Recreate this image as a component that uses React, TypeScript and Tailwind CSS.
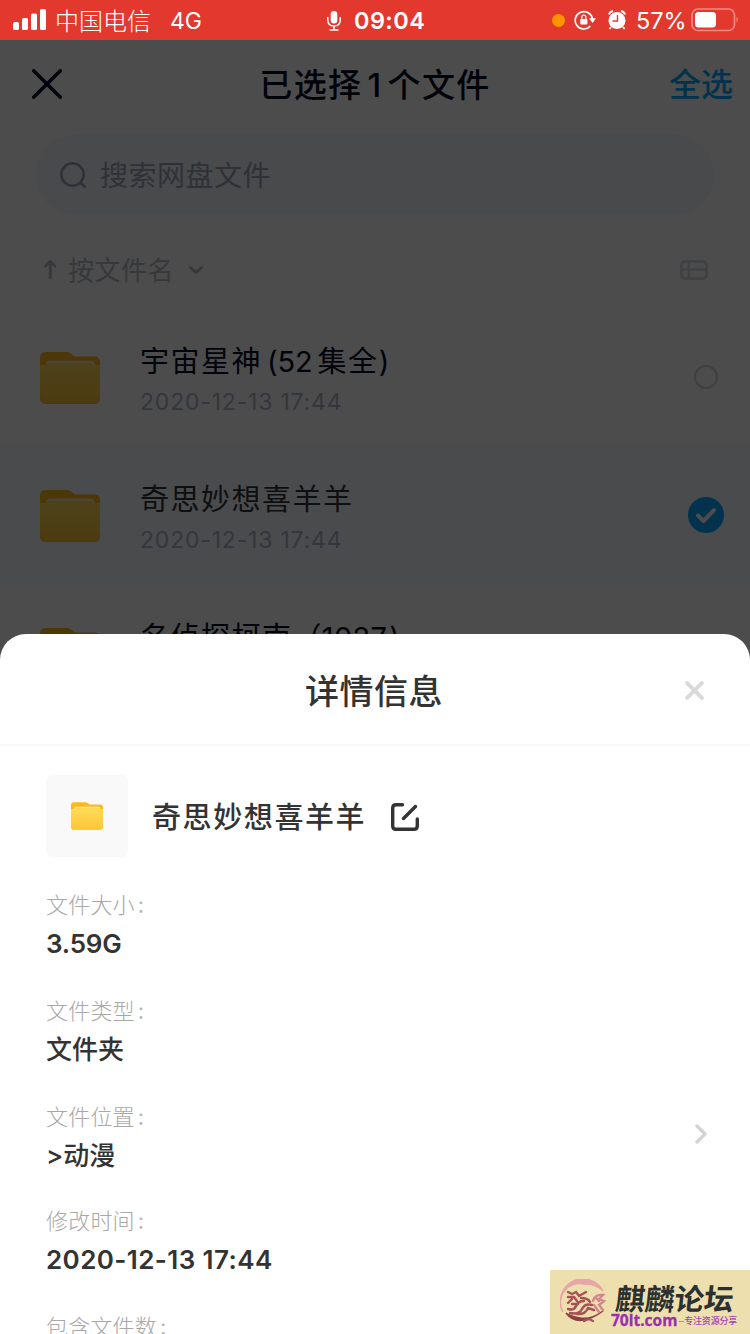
import React from 'react';

const font = "font-['Inter','Noto_Sans_CJK_SC',sans-serif]";

function Folder({ className, dim }: { className: string; dim?: boolean }) {
  const id = dim ? 'fd' : 'fl';
  const back = dim ? '#4c3708' : '#ffb81c';
  const top = dim ? '#4c421a' : '#ffdb58';
  const bottom = dim ? '#4c3b10' : '#ffc636';
  const edge = dim ? '#4c4534' : '#ffe6ae';
  return (
    <svg viewBox="0 0 60 52" className={className}>
      <defs>
        <linearGradient id={id} x1="0" y1="0" x2="0" y2="1">
          <stop offset="0" stopColor={top} />
          <stop offset="1" stopColor={bottom} />
        </linearGradient>
      </defs>
      <path d="M0 6Q0 0 6 0H27Q29 0 31 1.5L34 4Q35 4.600 37 4.600H54Q60 4.600 60 10.500V20H0Z" fill={back} />
      <path d="M5.500 14Q5.500 8.500 10 8.500H51Q55 8.500 55 14Z" fill={edge} />
      <path d="M0 13H6Q6 11 9 11H51Q54 11 54.500 13H60V46Q60 52 54 52H6Q0 52 0 46Z" fill={`url(#${id})`} />
      <path d="M.6 44Q.6 51.400 7 51.400H53Q59.400 51.400 59.400 44" fill="none" stroke={back} strokeWidth="1" opacity=".7" />
    </svg>
  );
}

function StatusBar() {
  return (
    <div className="flex h-10 shrink-0 items-center bg-[#e3382e] text-white">
      <svg viewBox="0 0 34 22" className="ml-[13px] h-[22px] w-[34px] shrink-0" fill="white">
        <rect y="13" width="6" height="8" rx="1.600" />
        <rect x="9" y="9" width="6" height="12" rx="1.600" />
        <rect x="18" y="4.500" width="6" height="16.500" rx="1.600" />
        <rect x="27" y="0" width="6" height="21" rx="1.600" />
      </svg>
      <div className="ml-2 w-[115px] pt-[3px] text-[24px] leading-[37px] font-light whitespace-nowrap">中国电信</div>
      <div className="w-[157px] pt-[2px] text-[23px] leading-[38px]">4G</div>
      <svg viewBox="0 0 14 20" className="mt-[1px] h-5 w-[14px] shrink-0" fill="none" stroke="white" strokeWidth="1.500">
        <rect x="3.700" y="0" width="6.600" height="12.500" rx="3.300" fill="white" stroke="none" />
        <path d="M.8 6V9Q.8 15 7 15T13.200 9V6M7 15V19M2.500 19H11.500" />
      </svg>
      <div className="ml-[13px] w-[198px] pt-[2px] text-[23.500px] leading-[38px] font-semibold tracking-[0.4px]">09:04</div>
      <div className="mt-[1px] size-[13px] shrink-0 rounded-full bg-[#ff9500]" />
      <svg viewBox="0 0 22 20" className="ml-[9px] h-5 w-[22px] shrink-0" fill="none" stroke="white" strokeWidth="1.700">
        <path d="M16.300 16.200A8.700 8.700 0 1 1 18.500 9" />
        <path d="M15 8.300H22L18.500 13Z" fill="white" stroke="none" />
        <rect x="6.200" y="8.900" width="7.200" height="5.500" rx=".8" fill="white" stroke="none" />
        <path d="M7.800 9V7.200Q7.800 5.200 9.800 5.200T11.800 7.200V9" strokeWidth="1.300" />
      </svg>
      <svg viewBox="0 0 18 20" className="ml-3 h-5 w-[18px] shrink-0">
        <circle cx="9" cy="10.500" r="8.500" fill="white" />
        <path d="M.8 4.500Q2 1.500 5 1M17.200 4.500Q16 1.500 13 1M3 17L1.500 19M15 17L16.500 19" stroke="white" strokeWidth="1.900" fill="none" />
        <path d="M9.500 5V11H4.500" stroke="#e3382e" strokeWidth="1.400" fill="none" />
      </svg>
      <div className="ml-[10px] w-[54px] pt-[2px] text-[23.500px] leading-[38px] whitespace-nowrap">57%</div>
      <svg viewBox="0 0 48 24" className="ml-[1px] h-6 w-12 shrink-0">
        <rect x="1" y="1" width="42.500" height="21.500" rx="6" fill="none" stroke="#f08a84" strokeWidth="1.700" />
        <rect x="4" y="4" width="21" height="15.500" rx="3.500" fill="white" />
        <path d="M45.500 8.500Q48 11.700 45.500 15Z" fill="#f08a84" />
      </svg>
    </div>
  );
}

function FileRow({ name, selected }: { name: React.ReactNode; selected?: boolean }) {
  return (
    <div className={`flex h-[138px] shrink-0 ${selected ? 'bg-[#494b4d]' : ''}`}>
      <Folder dim className="mt-[44px] ml-10 h-[52px] w-[60px] shrink-0" />
      <div className="ml-10 grow pt-[34px]">
        <div className={`h-10 text-[29px] leading-10 tracking-[1.500px] whitespace-pre ${selected ? 'text-[#0f0f0f]' : 'text-[#01030a]'}`}>{name}</div>
        <div className="mt-1 text-[23px] leading-8 tracking-[0.8px] text-[#34363d]">2020-12-13 17:44</div>
      </div>
      <div className="mt-[51px] mr-[26px] flex size-9 items-center justify-center">
        {selected ? (
          <svg viewBox="0 0 36 36" className="size-9">
            <circle cx="18" cy="18" r="18" fill="#02324d" />
            <path d="M10 18.500L15.500 24L26 13" fill="none" stroke="#4c4c4c" strokeWidth="4" strokeLinecap="round" strokeLinejoin="round" />
          </svg>
        ) : (
          <div className="size-6 rounded-full border-[2.500px] border-[#3f4043]" />
        )}
      </div>
    </div>
  );
}

function Detail({ label, value, className = '' }: { label: string; value?: string; className?: string }) {
  return (
    <div className={className}>
      <div className="h-8 text-[22px] leading-8 font-light tracking-[0.2px] text-[#a8a8a8]">
        {label}<span className="ml-[3px] font-normal text-[#b5b5b5]">:</span>
      </div>
      {value && <div className="mt-[5px] h-9 text-[26px] leading-9 font-medium"><span className={/^\d/.test(value) ? (value.length > 8 ? 'font-semibold tracking-[0.4px]' : 'font-semibold -tracking-[0.2px]') : ''}>{value}</span></div>}
    </div>
  );
}

function Watermark() {
  return (
    <div className="absolute right-0 bottom-0 flex h-16 w-[200px] bg-[#eee0ae]">
      <svg viewBox="0 0 48 48" className="mt-[9px] ml-[10px] size-12 shrink-0" fill="none" strokeLinecap="round">
        <path d="M3 33A21.500 21.500 0 0 1 43 12Q35 4 24 5A19 19 0 0 0 3 33Z" fill="#e9a6a8" stroke="#e9a6a8" strokeWidth="1.500" />
        <path d="M6 34Q18 50 43 32Q31 41 20 39T6 34Z" fill="#8c3f42" stroke="#8c3f42" strokeWidth="1.500" />
        <g stroke="#a85257" strokeWidth="2.400">
          <path d="M8 13L12 15L16 13L19 17L26 13M8 18L14 18L17 22M8 24L12 20M8 30Q14 32 16 27T24 22" />
          <path d="M10 34Q19 36 22 30T32 26M17 35Q25 36 28 29L34 31M12 25L18 25M21 19Q28 19 30 23M24 42L29 40L33 42" />
        </g>
        <path d="M33 22Q35 15 43 16L39 20L44 22L39 26L43 31M34 26L39 33M36 19L39 22" stroke="#d1878b" strokeWidth="2.400" />
      </svg>
      <div className="ml-[3px] flex w-[128px] flex-col pt-[10px]">
        <div className="h-[32px] -skew-x-6 pl-[5px] text-[29.500px] leading-[34px] font-bold whitespace-nowrap text-[#2d3030] font-['Noto_Sans_CJK_SC']">麒麟论坛</div>
        <div className="flex h-[18px] items-center whitespace-nowrap">
          <span className="-mt-[3px] text-[15.500px] leading-[18px] font-bold text-[#9b2fae] font-['Open_Sans'] [-webkit-text-stroke:0.3px_#9b2fae]">70lt.com</span>
          <span className="ml-px text-[9px] leading-[18px] tracking-[-0.2px] text-[#a544b8] font-['Noto_Sans_CJK_SC']">--</span>
          <span className="text-[9px] leading-[18px] font-medium tracking-[-0.2px] text-[#a544b8] font-['Noto_Sans_CJK_SC']">专注资源分享</span>
        </div>
      </div>
    </div>
  );
}

export default function App() {
  return (
    <div className={`relative flex h-[1334px] w-[750px] flex-col overflow-hidden bg-[#4c4c4c] ${font}`}>
      <StatusBar />
      <div className="flex h-[88px] shrink-0 items-center">
        <div className="w-[150px] pl-8">
          <svg viewBox="0 0 30 30" className="size-[30px]" stroke="#01030a" strokeWidth="3.400" strokeLinecap="round">
            <path d="M1.700 1.700L28.300 28.300M28.300 1.700L1.700 28.300" />
          </svg>
        </div>
        <div className="grow pt-[3px] text-center text-[33px] font-medium tracking-[1.400px] text-[#01030a]">已选择<span className="mx-[5px]">1</span>个文件</div>
        <div className="w-[150px] pt-[1px] pr-[17px] text-right text-[32px] font-medium text-[#02324d]">全选</div>
      </div>
      <div className="mx-9 mt-[7px] flex h-20 shrink-0 items-center rounded-full bg-[#484a4c] pl-6 text-[#2f3138]">
        <svg viewBox="0 0 28 28" className="size-7" fill="none" stroke="#2f3138" strokeWidth="2.500" strokeLinecap="round">
          <circle cx="12.500" cy="13.500" r="11.200" /><path d="M20.800 22L25 26" />
        </svg>
        <div className="ml-3 pt-[2px] text-[28px] tracking-[0.5px]">搜索网盘文件</div>
      </div>
      <div className="flex h-[93px] shrink-0 items-center pt-[17px] text-[#36383b]">
        <svg viewBox="0 0 12 20" className="ml-[44px] h-5 w-3" fill="none" stroke="#36383b" strokeWidth="2.800" strokeLinecap="round" strokeLinejoin="round">
          <path d="M6.300 18V2M1.500 6L6.300 1.500L11 6" />
        </svg>
        <div className="ml-3 pt-[1px] text-[26px] tracking-[0.5px]">按文件名</div>
        <svg viewBox="0 0 14 8" className="ml-[15px] h-2 w-[14px]" fill="none" stroke="#36383b" strokeWidth="2.800" strokeLinecap="round" strokeLinejoin="round">
          <path d="M1.500 1.500L7 6.500L12.500 1.500" />
        </svg>
        <svg viewBox="0 0 28 20" className="mr-[42px] ml-auto h-5 w-7" fill="none" stroke="#404144" strokeWidth="2.800">
          <rect x="1.400" y="1.400" width="25.200" height="17.200" rx="4" /><path d="M8.800 2V18M2 9.500H26" strokeWidth="2.400" />
        </svg>
      </div>
      <FileRow name={<>宇宙星神<span className="mr-[3px] ml-[5px] -tracking-[0.1px]">(52</span><span className="ml-[2px]">集全</span><span>)</span></>} />
      <FileRow name="奇思妙想喜羊羊" selected />
      <FileRow name={<>名侦探柯南<span className="tracking-[0.3px]">（1027<span className="ml-[2px]">)</span></span></>} />

      <div className="absolute inset-x-0 top-[634px] bottom-0 flex flex-col overflow-hidden rounded-t-[26px] bg-white text-[#333]">
        <div className="flex h-[112px] shrink-0 items-center border-b-2 border-[#f8f8f8]">
          <div className="w-[100px]" />
          <div className="grow pt-[5px] pr-[2px] text-center text-[34px] leading-[50px] font-medium tracking-[0.5px]">详情信息</div>
          <div className="w-[100px] pt-[2px] pl-[35px]">
            <svg viewBox="0 0 20 20" className="size-[19px]" stroke="#d9d9d9" strokeWidth="4" strokeLinecap="round">
              <path d="M2.200 2.200L17.800 17.800M17.800 2.200L2.200 17.800" />
            </svg>
          </div>
        </div>
        <div className="mt-[29px] ml-[46px] flex h-[82px] shrink-0 items-center">
          <div className="flex size-[82px] items-center justify-center rounded-md bg-[#f9f9f9]">
            <Folder className="h-7 w-8" />
          </div>
          <div className="ml-[24px] pt-[3px] text-[29px] font-medium tracking-[1.600px]">奇思妙想喜羊羊</div>
          <svg viewBox="0 0 28 28" className="mt-[1px] ml-[25px] size-7" fill="none" stroke="#333" strokeWidth="3.400" strokeLinecap="round" strokeLinejoin="round">
            <path d="M11.500 1.700H5Q1.700 1.700 1.700 5V23Q1.700 26.300 5 26.300H23Q26.300 26.300 26.300 23V16M12.500 15.500L24.500 3.500" />
          </svg>
        </div>
        <div className="mt-8 flex grow flex-col pl-[46px]">
          <Detail label="文件大小" value="3.59G" className="h-[106px] shrink-0" />
          <Detail label="文件类型" value="文件夹" className="h-[106px] shrink-0" />
          <div className="flex h-[104px] shrink-0 justify-between">
            <Detail label="文件位置" value=">动漫" />
            <svg viewBox="0 0 12 20" className="mt-[23px] mr-[43px] h-5 w-3" fill="none" stroke="#d3d3d3" strokeWidth="3.200" strokeLinecap="round" strokeLinejoin="round">
              <path d="M2 2L10 10L2 18" />
            </svg>
          </div>
          <Detail label="修改时间" value="2020-12-13 17:44" className="h-[106px] shrink-0" />
          <Detail label="包含文件数" />
        </div>
      </div>
      <Watermark />
    </div>
  );
}
